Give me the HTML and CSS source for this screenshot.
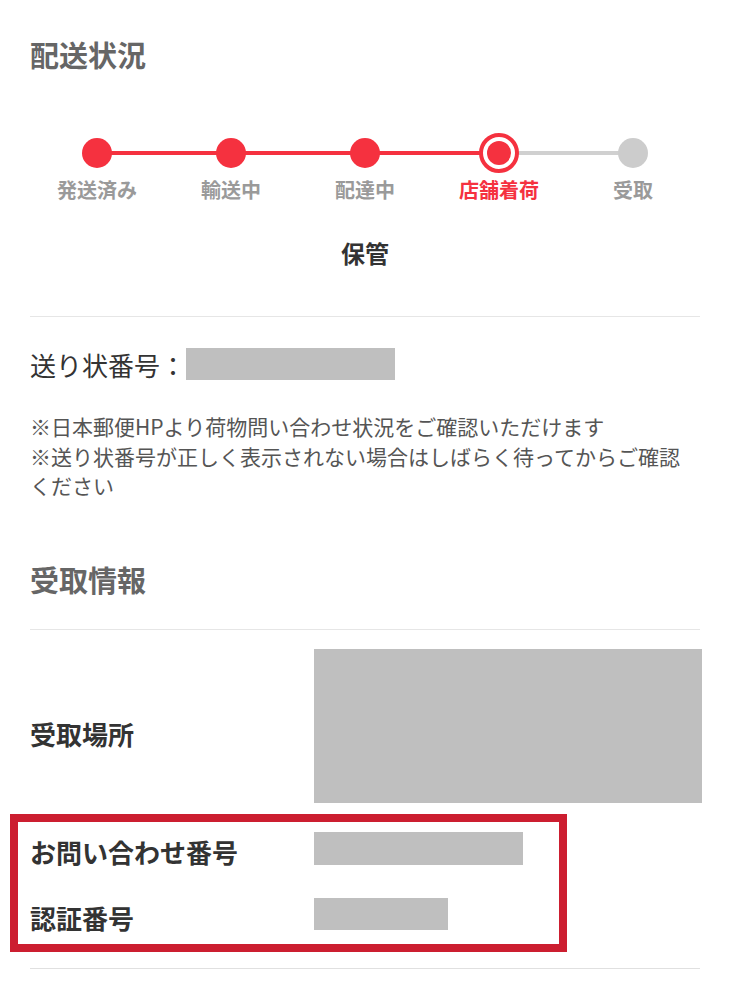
FILE: index.html
```html
<!DOCTYPE html>
<html lang="ja">
<head>
    <meta charset="UTF-8">
    <meta name="viewport" content="width=device-width, initial-scale=1.0">
    <title>配送状況</title>
    <link rel="stylesheet" href="styles.css">
</head>
<body>
    <div class="container">
        <!-- 配送状況 -->
        <div class="section status-section">
            <h2 class="section-title">配送状況</h2>

            <ol class="stepper">
                <li class="step done"><span class="dot"></span><span class="step-label">発送済み</span></li>
                <li class="step done"><span class="dot"></span><span class="step-label">輸送中</span></li>
                <li class="step done"><span class="dot"></span><span class="step-label">配達中</span></li>
                <li class="step current"><span class="dot"></span><span class="step-label">店舗着荷</span></li>
                <li class="step"><span class="dot"></span><span class="step-label">受取</span></li>
            </ol>

            <div class="status-text">保管</div>
        </div>

        <!-- 送り状番号 -->
        <div class="tracking">
            <span class="tracking-label">送り状番号：</span>
            <span class="mask mask-tracking"></span>
        </div>

        <div class="notes">
            <p>※日本郵便HPより荷物問い合わせ状況をご確認いただけます</p>
            <p>※送り状番号が正しく表示されない場合はしばらく待ってからご確認ください</p>
        </div>

        <!-- 受取情報 -->
        <div class="section info-section">
            <h2 class="section-title">受取情報</h2>
        </div>

        <div class="info-row place-row">
            <div class="info-label">受取場所</div>
            <div class="mask mask-place"></div>
        </div>

        <div class="highlight">
            <div class="info-row code-row">
                <div class="info-label">お問い合わせ番号</div>
                <div class="mask mask-inquiry"></div>
            </div>
            <div class="info-row code-row">
                <div class="info-label">認証番号</div>
                <div class="mask mask-auth"></div>
            </div>
        </div>

        <div class="divider"></div>
    </div>
</body>
</html>
```

FILE: styles.css
```css
* {
    margin: 0;
    padding: 0;
    box-sizing: border-box;
}

body {
    font-family: "Noto Sans CJK JP", "Noto Sans", sans-serif;
    background: #fff;
    color: #333;
}

.container {
    padding: 0 30px;
}

.section {
    border-bottom: 1px solid #e6e6e6;
}

.section-title {
    font-size: 29px;
    line-height: 40px;
    font-weight: 700;
    color: #666;
}

.status-section {
    padding-top: 34px;
    padding-bottom: 47px;
}

/* stepper */
.stepper {
    list-style: none;
    display: flex;
    margin-top: 59px;
}

.step {
    position: relative;
    flex: 1;
    display: flex;
    flex-direction: column;
    align-items: center;
}

/* connector from the previous step's dot to this one */
.step + .step::before {
    content: "";
    position: absolute;
    top: 18px;
    left: -50%;
    width: 100%;
    height: 4px;
    background: #d0d0d0;
}

.step.done::before,
.step.current::before {
    background: #f5313f;
}

.dot {
    position: relative;
    z-index: 1;
    width: 40px;
    height: 40px;
    display: flex;
    align-items: center;
    justify-content: center;
}

.dot::after {
    content: "";
    width: 30px;
    height: 30px;
    border-radius: 50%;
    background: #cccccc;
}

.step.done .dot::after {
    background: #f5313f;
}

.step.current .dot {
    border: 4px solid #f5313f;
    border-radius: 50%;
    background: #fff;
}

.step.current .dot::after {
    width: 24px;
    height: 24px;
    background: #f5313f;
}

.step-label {
    margin-top: 5px;
    font-size: 20px;
    line-height: 24px;
    font-weight: 700;
    color: #9a9a9a;
}

.step.current .step-label {
    color: #f5313f;
}

.status-text {
    margin-top: 35px;
    text-align: center;
    font-size: 24px;
    line-height: 32px;
    font-weight: 700;
    color: #333;
}

/* tracking number */
.tracking {
    display: flex;
    align-items: center;
    height: 40px;
    margin-top: 27px;
}

.tracking-label {
    font-size: 26px;
    color: #333;
}

.mask {
    flex-shrink: 0;
    background: #bfbfbf;
}

.mask-tracking {
    width: 209px;
    height: 32px;
}

.notes {
    margin-top: 28px;
    max-width: 660px;
    font-size: 21px;
    line-height: 29.5px;
    color: #555;
}

.info-section {
    padding-top: 58px;
    padding-bottom: 30px;
}

/* receiving info */
.info-row {
    display: flex;
}

.info-label {
    width: 284px;
    flex-shrink: 0;
    font-size: 26px;
    line-height: 34px;
    font-weight: 700;
    color: #333;
}

.place-row {
    margin-top: 19px;
    align-items: center;
}

.place-row .info-label {
    padding-top: 16px;
}

.mask-place {
    width: 388px;
    height: 154px;
}

.highlight {
    width: 557px;
    margin: 11px 0 0 -20px;
    padding: 10px 0 9px 12px;
    border: 8px solid #cc1e30;
}

.code-row {
    align-items: flex-start;
}

.code-row .info-label {
    margin-top: 3px;
}

.code-row + .code-row {
    margin-top: 29px;
}

.mask-inquiry {
    width: 209px;
    height: 33px;
}

.mask-auth {
    width: 134px;
    height: 32px;
}

.divider {
    margin-top: 16px;
    border-top: 1px solid #e0e0e0;
}
```
